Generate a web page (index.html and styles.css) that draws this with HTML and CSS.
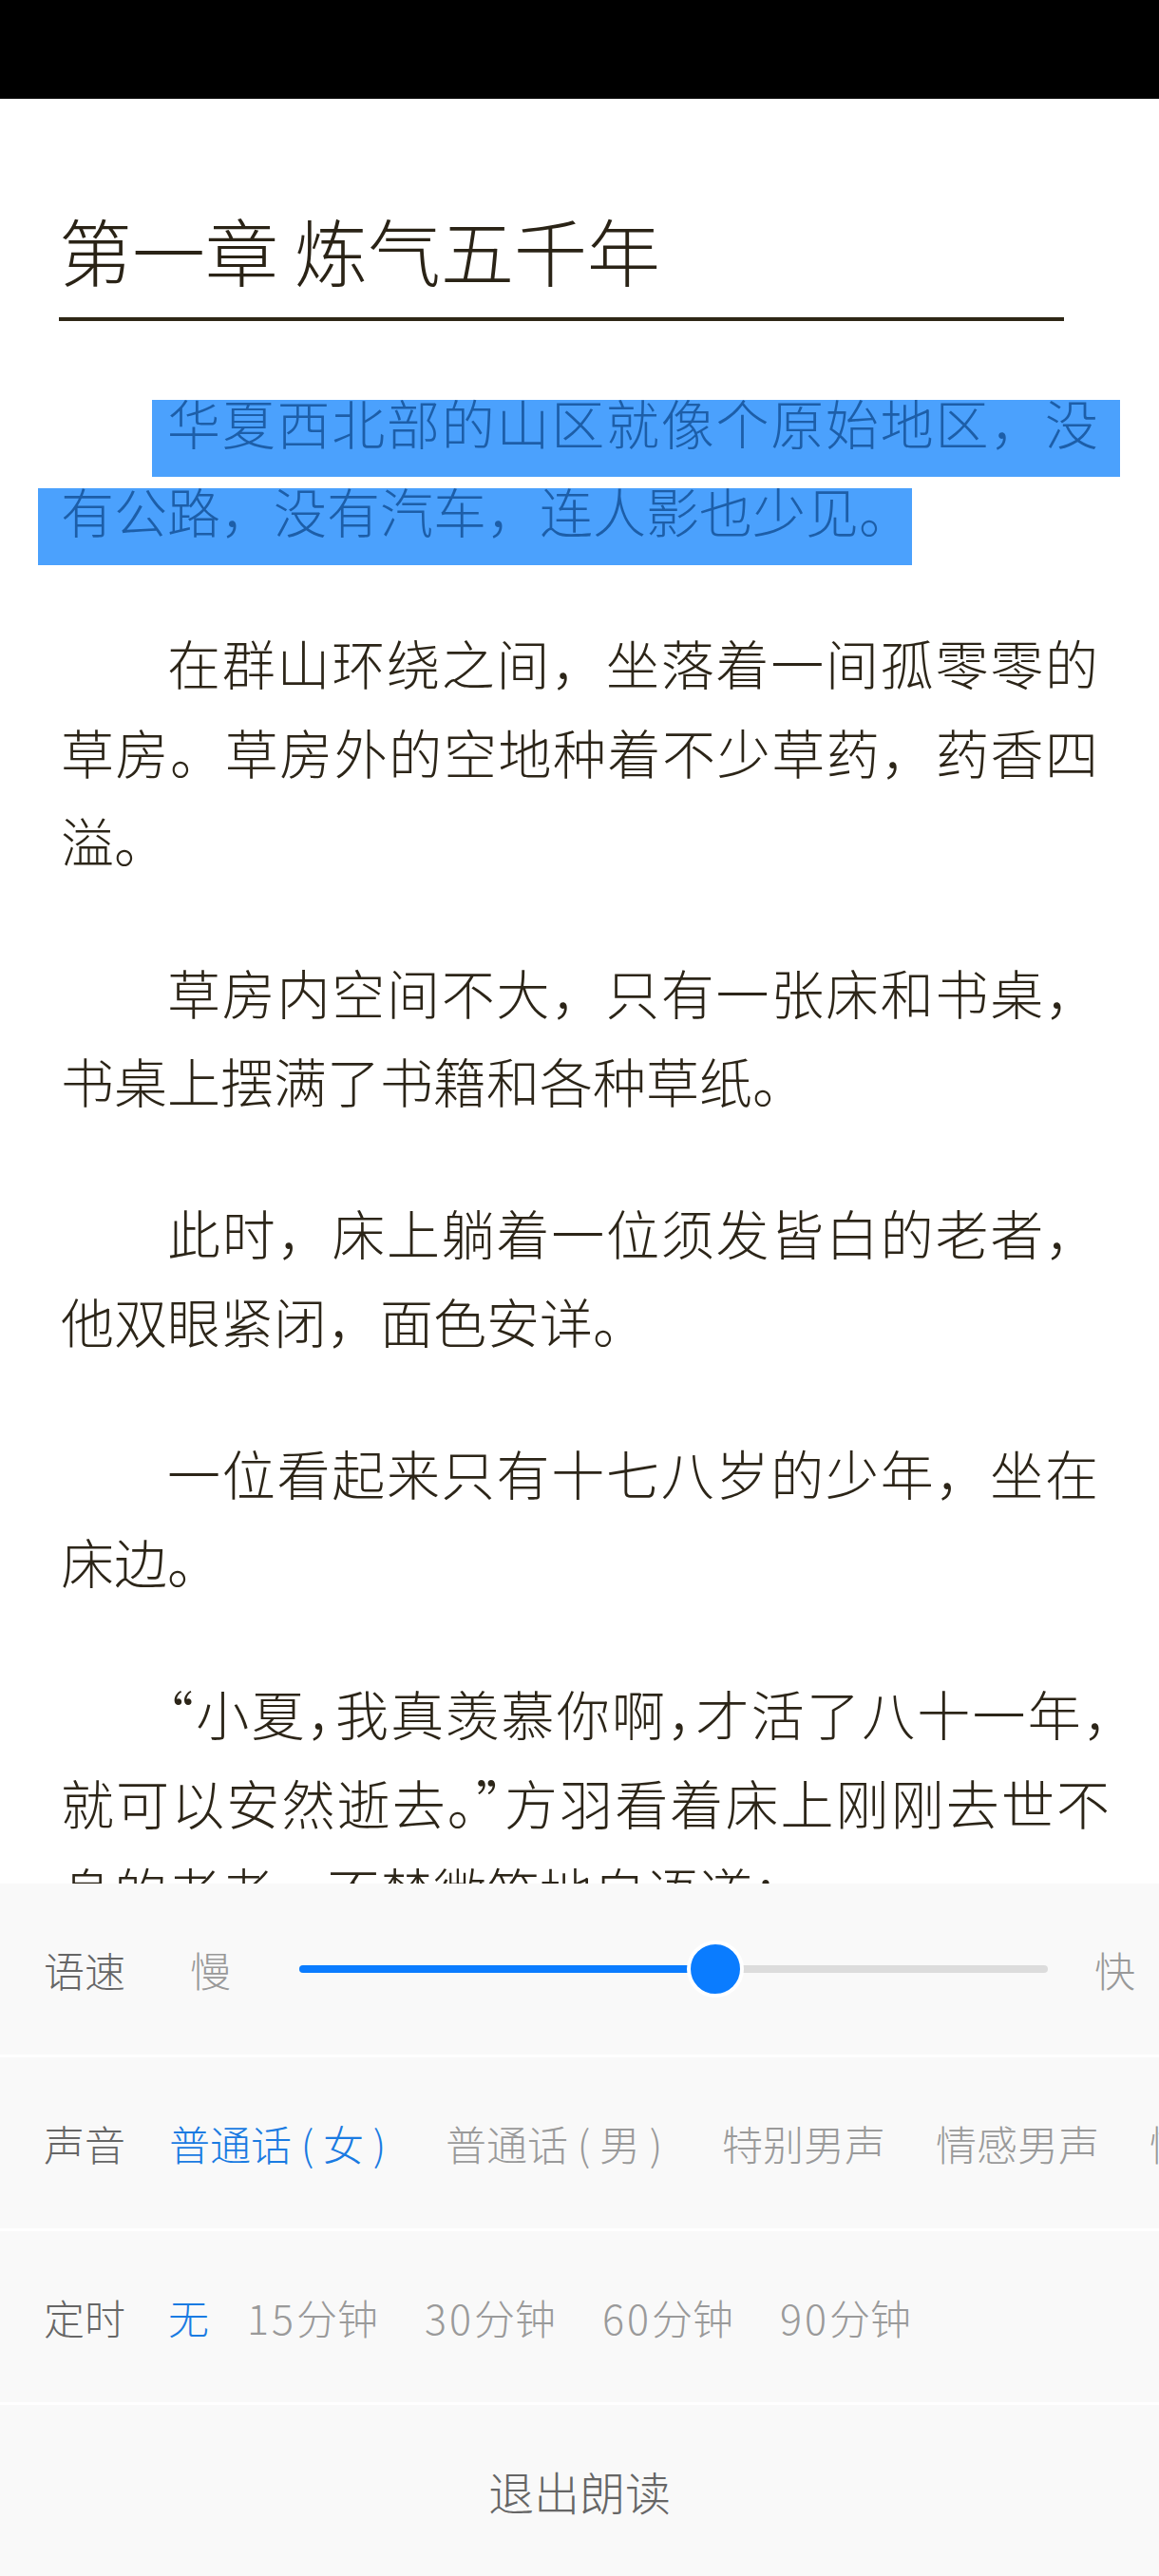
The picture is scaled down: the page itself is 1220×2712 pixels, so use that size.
FILE: index.html
```html
<!DOCTYPE html>
<html lang="zh-CN">
<head>
    <meta charset="UTF-8">
    <meta name="viewport" content="width=device-width, initial-scale=1.0">
    <title>第一章 炼气五千年</title>
    <link rel="stylesheet" href="styles.css">
</head>
<body>
    <div class="status-bar"></div>

    <div class="chapter">
        <h1 class="chapter-title">第一章 炼气五千年</h1>
    </div>

    <!-- 正文 -->
    <div class="text">
        <div class="para">
            <div class="line first full"><span class="sel sel-first">华夏西北部的山区就像个原始地区，没</span></div>
            <div class="line"><span class="sel sel-last">有公路，没有汽车，连人影也少见。</span></div>
        </div>
        <div class="para">
            <div class="line first full">在群山环绕之间，坐落着一间孤零零的</div>
            <div class="line full">草房。草房外的空地种着不少草药，药香四</div>
            <div class="line">溢。</div>
        </div>
        <div class="para">
            <div class="line first full">草房内空间不大，只有一张床和书桌，</div>
            <div class="line">书桌上摆满了书籍和各种草纸。</div>
        </div>
        <div class="para">
            <div class="line first full">此时，床上躺着一位须发皆白的老者，</div>
            <div class="line">他双眼紧闭，面色安详。</div>
        </div>
        <div class="para">
            <div class="line first full">一位看起来只有十七八岁的少年，坐在</div>
            <div class="line">床边。</div>
        </div>
        <div class="para">
            <div class="line first full wide"><span class="halt">“</span>小夏<span class="halt">，</span>我真羡慕你啊<span class="halt">，</span>才活了八十一年<span class="halt">，</span></div>
            <div class="line full wide">就可以安然逝去<span class="halt">。”</span>方羽看着床上刚刚去世不</div>
            <div class="line">身的老者，不禁微笑地自语道：</div>
        </div>
    </div>

    <!-- 朗读设置 -->
    <div class="tts-panel">
        <div class="tts-row speed">
            <span class="row-label">语速</span>
            <span class="slow">慢</span>
            <div class="slider">
                <div class="slider-fill" style="width: 55.6%"></div>
                <div class="slider-thumb" style="left: 55.6%"></div>
            </div>
            <span class="fast">快</span>
        </div>
        <div class="tts-row voice">
            <span class="row-label">声音</span>
            <span class="opt on">普通话<span class="pn">(</span>女<span class="pn">)</span></span>
            <span class="opt">普通话<span class="pn">(</span>男<span class="pn">)</span></span>
            <span class="opt">特别男声</span>
            <span class="opt">情感男声</span>
            <span class="opt">情感女声</span>
        </div>
        <div class="tts-row timer">
            <span class="row-label">定时</span>
            <span class="opt on">无</span>
            <span class="opt short"><span class="num">15</span>分钟</span>
            <span class="opt"><span class="num">30</span>分钟</span>
            <span class="opt"><span class="num">60</span>分钟</span>
            <span class="opt"><span class="num">90</span>分钟</span>
        </div>
        <div class="tts-row exit">退出朗读</div>
    </div>
</body>
</html>
```

FILE: styles.css
```css
* {
    margin: 0;
    padding: 0;
    box-sizing: border-box;
}

body {
    position: relative;
    width: 1220px;
    height: 2712px;
    overflow: hidden;
    background: #fff;
    color: #2c2518;
    font-family: "Noto Sans CJK SC", "Noto Sans", sans-serif;
    font-weight: 300;
}

.status-bar {
    height: 104px;
    background: #000;
}

.chapter {
    margin: 0 100px 0 62px;
    padding-top: 113px;
    padding-bottom: 25px;
    border-bottom: 4px solid #2e2716;
}

.chapter-title {
    font-size: 77px;
    font-weight: 300;
    line-height: 92px;
    color: #2a2316;
}

.text {
    width: 1092px;
    margin: 59px 0 0 64px;
    font-size: 56px;
}

.para {
    margin-bottom: 66.4px;
}

.line {
    height: 93.4px;
    line-height: 93.4px;
}

.first {
    text-indent: 2em;
}

.full {
    text-align: justify;
    text-align-last: justify;
}

.wide {
    width: 1104px;
}

.halt {
    font-feature-settings: "halt";
}

/* 选中文字 */
.sel {
    color: #1d5ea8;
    padding-bottom: 18px;
    background: linear-gradient(transparent 18px, #4ba1fd 18px);
}

.sel-first {
    padding-left: 16px;
    margin-left: -16px;
    padding-right: 23px;
    margin-right: -23px;
}

.sel-last {
    padding-left: 24px;
    margin-left: -24px;
}

/* 朗读面板 */
.tts-panel {
    position: absolute;
    left: 0;
    right: 0;
    bottom: 0;
    background: #f9f9f9;
}

.tts-row {
    display: flex;
    align-items: center;
    height: 180px;
    padding: 0 25px 0 46px;
    font-size: 43px;
    white-space: nowrap;
    overflow: hidden;
}

.tts-row + .tts-row {
    height: 183px;
    border-top: 3px solid #fff;
}

.row-label {
    color: #666;
    margin-right: 46px;
    flex-shrink: 0;
}

.speed .row-label {
    margin-right: 68px;
}

.slow, .fast {
    color: #999;
}

.slider {
    position: relative;
    flex: 1;
    height: 8px;
    margin: 0 49px 0 72px;
    border-radius: 4px;
    background: #dcdcdc;
}

.slider-fill {
    height: 100%;
    border-radius: 4px;
    background: #0a7cff;
}

.slider-thumb {
    position: absolute;
    top: 50%;
    width: 60px;
    height: 60px;
    margin: -30px 0 0 -30px;
    border: 4px solid #fff;
    border-radius: 50%;
    background: #0a7cff;
}

.opt {
    flex-shrink: 0;
    color: #9a9a9a;
}

.opt.on {
    color: #1a7be2;
}

.voice .opt + .opt {
    margin-left: 53px;
}

.pn {
    display: inline-block;
    width: 33px;
    text-align: center;
}

.timer .row-label {
    margin-right: 45px;
}

.timer .opt + .opt {
    margin-left: 49px;
}

.timer .opt.short {
    margin-left: 40px;
}

.num {
    letter-spacing: 3px;
}

.exit {
    justify-content: center;
    padding: 0;
    font-size: 48px;
    color: #666;
}
```
